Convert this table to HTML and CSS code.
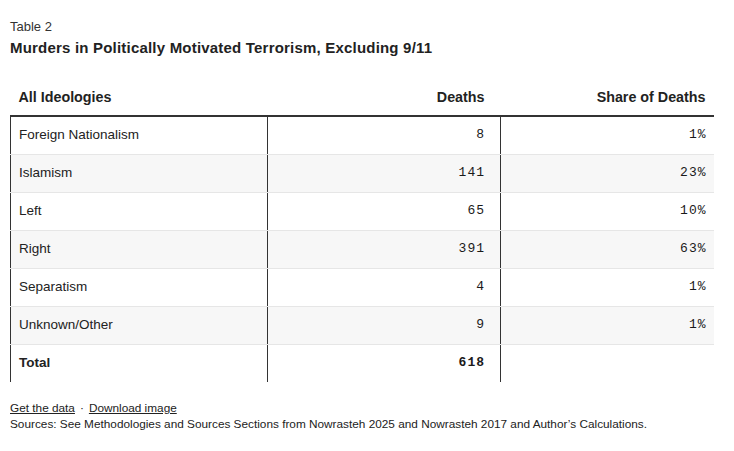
FILE: index.html
```html
<!DOCTYPE html>
<html lang="en">
<head>
<meta charset="utf-8">
<title>Table 2</title>
<link rel="stylesheet" href="styles.css">
</head>
<body>
<figure class="figure">
  <div class="eyebrow">Table 2</div>
  <h2 class="title">Murders in Politically Motivated Terrorism, Excluding 9/11</h2>
  <table class="data">
    <colgroup>
      <col class="w1">
      <col class="w2">
      <col class="w3">
    </colgroup>
    <thead>
      <tr>
        <th class="c1">All Ideologies</th>
        <th class="c2 num">Deaths</th>
        <th class="c3 num">Share of Deaths</th>
      </tr>
    </thead>
    <tbody>
      <tr><td class="c1">Foreign Nationalism</td><td class="c2 num mono">8</td><td class="c3 num mono">1%</td></tr>
      <tr class="alt"><td class="c1">Islamism</td><td class="c2 num mono">141</td><td class="c3 num mono">23%</td></tr>
      <tr><td class="c1">Left</td><td class="c2 num mono">65</td><td class="c3 num mono">10%</td></tr>
      <tr class="alt"><td class="c1">Right</td><td class="c2 num mono">391</td><td class="c3 num mono">63%</td></tr>
      <tr><td class="c1">Separatism</td><td class="c2 num mono">4</td><td class="c3 num mono">1%</td></tr>
      <tr class="alt"><td class="c1">Unknown/Other</td><td class="c2 num mono">9</td><td class="c3 num mono">1%</td></tr>
      <tr class="total"><td class="c1">Total</td><td class="c2 num mono">618</td><td class="c3 num mono"></td></tr>
    </tbody>
  </table>
  <div class="links"><a href="#">Get the data</a><span class="dot">·</span><a href="#">Download image</a></div>
  <div class="sources">Sources: See Methodologies and Sources Sections from Nowrasteh 2025 and Nowrasteh 2017 and Author’s Calculations.</div>
</figure>
</body>
</html>
```

FILE: styles.css
```css
html, body {
  margin: 0;
  padding: 0;
  background: #fff;
}

body {
  font-family: "Liberation Sans", Arial, sans-serif;
  color: #222;
}

.figure {
  margin: 0;
  padding: 19px 10px 0 10px;
}

.eyebrow {
  font-size: 13px;
  line-height: 16px;
  color: #333;
}

.title {
  margin: 4px 0 0 0;
  font-size: 15px;
  line-height: 18px;
  font-weight: bold;
  letter-spacing: 0.2px;
  color: #222;
}

.data {
  margin-top: 22px;
  width: 703px;
  border-collapse: collapse;
  table-layout: fixed;
}

.w1 { width: 257px; }
.w2 { width: 233px; }
.w3 { width: 213px; }

.data th,
.data td {
  box-sizing: border-box;
}

.data th {
  height: 37px;
  font-size: 14.3px;
  font-weight: bold;
  text-align: left;
  padding: 0 8px 1px 8px;
  border-bottom: 2px solid #333;
  color: #222;
}

.data th.num { text-align: right; }
.data th.c2 { padding-right: 16px; }

.data td {
  height: 38px;
  font-size: 13.5px;
  padding: 0 8px 1px 8px;
  border-bottom: 1px solid #e6e6e6;
  color: #222;
}

.data td.c1 { border-left: 1px solid #333; }
.data td.c2 { border-left: 1px solid #333; padding-right: 15px; }
.data td.c3 { border-left: 1px solid #333; padding-right: 7px; }

.data .num { text-align: right; }

.data .mono {
  font-family: "Liberation Mono", "DejaVu Sans Mono", monospace;
  font-size: 13px;
  letter-spacing: 1px;
  color: #1a1a1a;
}

.data tr.alt td { background: #f7f7f7; }

.data tr.total td {
  font-weight: bold;
  border-bottom: none;
}

.links {
  margin-top: 18px;
  font-size: 11.8px;
  line-height: 16px;
  color: #222;
}

.links a {
  color: #222;
  text-decoration: underline;
}

.dot {
  margin: 0 5px;
}

.sources {
  font-size: 11.8px;
  line-height: 16px;
  color: #222;
}
```
